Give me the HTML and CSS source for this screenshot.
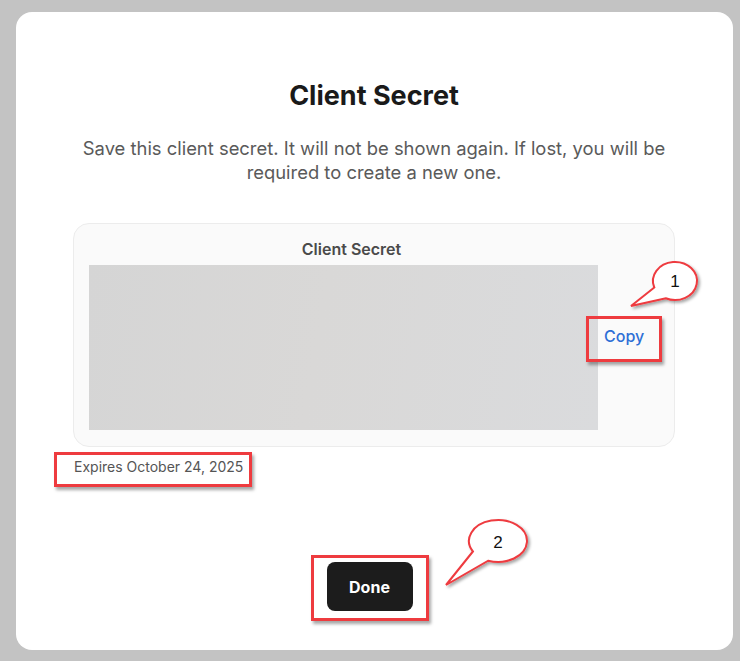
FILE: index.html
```html
<!DOCTYPE html>
<html lang="en">
<head>
<meta charset="utf-8">
<title>Client Secret</title>
<link rel="stylesheet" href="styles.css">
</head>
<body>
<div class="modal">
  <h1 class="title">Client Secret</h1>
  <p class="desc">Save this client secret. It will not be shown again. If lost, you will be required to create a new one.</p>
  <div class="secret-card">
    <div class="secret-label">Client Secret</div>
    <div class="secret-value"></div>
    <a class="copy marked marked-copy" href="#">Copy</a>
  </div>
  <div class="expires-row">
    <span class="expires marked marked-exp">Expires October 24, 2025</span>
  </div>
  <div class="actions">
    <button class="done marked marked-done" type="button">Done</button>
  </div>
</div>
<svg class="callouts" width="740" height="661" viewBox="0 0 740 661">
  <defs>
    <filter id="sh" x="-30%" y="-30%" width="160%" height="160%">
      <feDropShadow dx="2" dy="2" stdDeviation="1.5" flood-color="#000" flood-opacity="0.35"/>
    </filter>
  </defs>
  <path filter="url(#sh)" d="M654.3,287.5 L631,306 L665.7,298.2 A22,19 0 1 0 654.3,287.5 Z" fill="#fff" stroke="#ee3b3f" stroke-width="2"/>
  <text x="675" y="287" text-anchor="middle" class="num">1</text>
  <path filter="url(#sh)" d="M472.9,551.5 L446,585 L488.1,560.7 A29,21 0 1 0 472.9,551.5 Z" fill="#fff" stroke="#ee3b3f" stroke-width="2"/>
  <text x="498" y="548" text-anchor="middle" class="num">2</text>
</svg>
</body>
</html>
```
FILE: styles.css
```css
html, body {
  margin: 0;
  padding: 0;
}
body {
  background: #c3c3c3;
  width: 740px;
  height: 661px;
  position: relative;
  overflow: hidden;
  font-family: Inter, "Liberation Sans", Arial, sans-serif;
}
.modal {
  box-sizing: border-box;
  margin: 12px 7px 0 16px;
  width: 717px;
  height: 638px;
  background: #fff;
  border-radius: 16px;
  display: flex;
  flex-direction: column;
  align-items: center;
  padding: 68px 58px 0 57px;
}
.title {
  margin: 0;
  font-size: 27px;
  line-height: 32px;
  font-weight: 700;
  color: #1a1a1a;
}
.desc {
  margin: 24px 0 0;
  font-size: 18.4px;
  line-height: 24px;
  color: #5a5a5a;
  text-align: center;
}
.secret-card {
  box-sizing: border-box;
  align-self: stretch;
  margin-top: 39px;
  height: 224px;
  background: #fafafa;
  border: 1px solid #ececec;
  border-radius: 16px;
  display: grid;
  grid-template-columns: 509px 1fr;
  grid-template-rows: 20px 165px;
  row-gap: 6px;
  padding: 15px 0 0 15px;
}
.secret-label {
  grid-column: 1;
  grid-row: 1;
  text-align: center;
  padding-left: 16px;
  font-size: 16px;
  line-height: 20px;
  font-weight: 600;
  color: #4a4a4a;
}
.secret-value {
  grid-column: 1;
  grid-row: 2;
  background: linear-gradient(100deg, #d5d5d5 0%, #d9d8d7 45%, #dadbdd 100%);
}
.copy {
  grid-column: 2;
  grid-row: 2;
  align-self: center;
  justify-self: start;
  margin-left: 6px;
  margin-top: -24px;
  font-size: 16px;
  line-height: 20px;
  font-weight: 500;
  color: #2e6fd6;
  text-decoration: none;
}
.expires-row {
  align-self: stretch;
  margin-top: 9px;
}
.expires {
  display: inline-block;
  margin-left: 1px;
  font-size: 14px;
  line-height: 18px;
  color: #555;
}
.actions {
  margin-top: 86px;
  margin-right: 9px;
}
.done {
  width: 86px;
  height: 49px;
  border: none;
  border-radius: 8px;
  background: #1c1c1c;
  color: #fff;
  font-family: Inter, "Liberation Sans", Arial, sans-serif;
  font-size: 16px;
  font-weight: 700;
  cursor: pointer;
}
.marked {
  position: relative;
}
.marked::after {
  content: "";
  position: absolute;
  border: 3px solid #ee3b3f;
  box-shadow: 2px 3px 3px rgba(0, 0, 0, 0.35);
  pointer-events: none;
}
.marked-copy::after {
  left: -18px;
  top: -10px;
  width: 70px;
  height: 40px;
}
.marked-exp::after {
  left: -20px;
  top: -6px;
  width: 192px;
  height: 29px;
}
.marked-done::after {
  left: -16px;
  top: -7px;
  width: 112px;
  height: 60px;
}
.callouts {
  position: absolute;
  left: 0;
  top: 0;
  pointer-events: none;
}
.num {
  font-family: "Liberation Sans", Arial, sans-serif;
  font-size: 17px;
  fill: #111;
}
```
